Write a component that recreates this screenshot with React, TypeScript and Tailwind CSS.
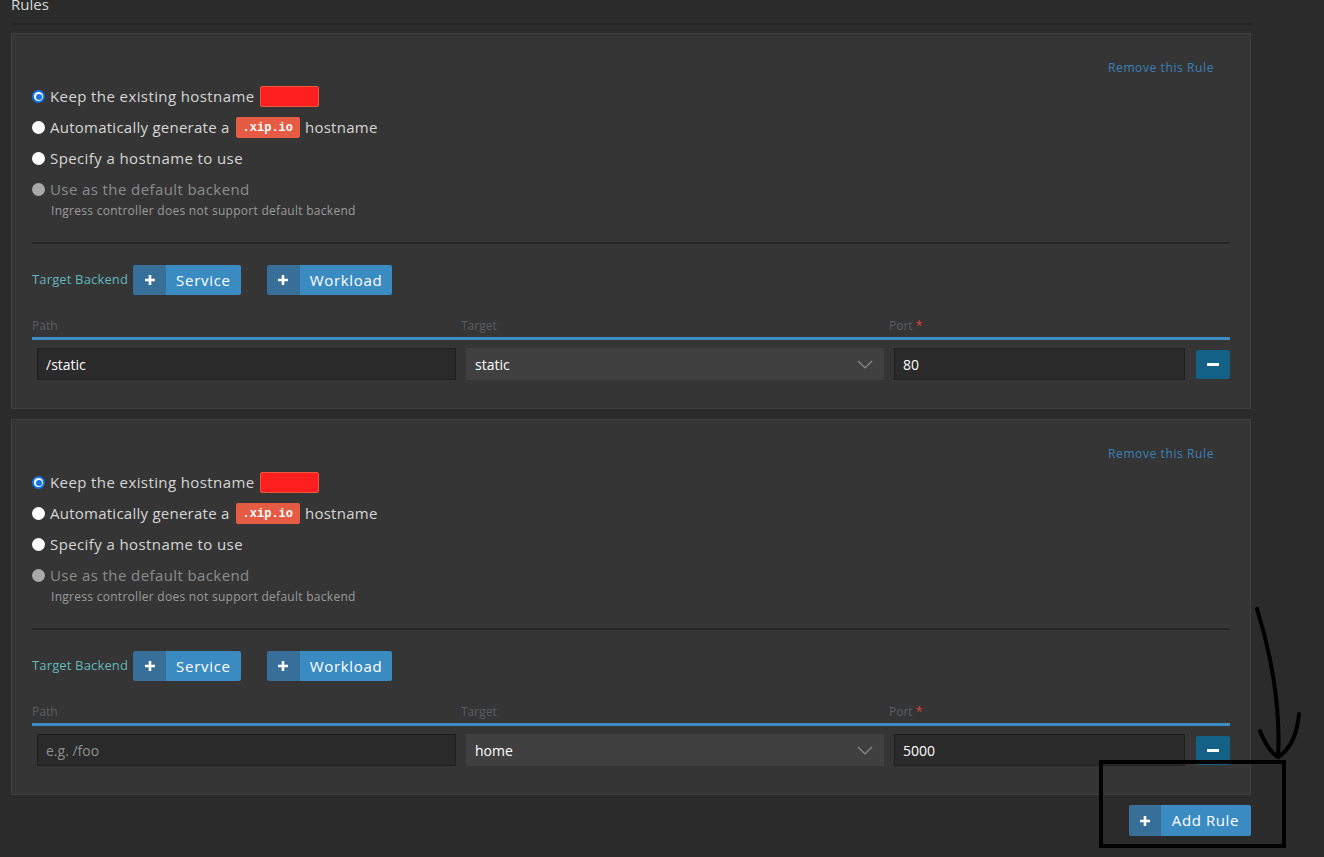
import React from "react";

interface Rule {
  path: string;
  target: string;
  port: string;
}

const rules: Rule[] = [
  { path: "/static", target: "static", port: "80" },
  { path: "", target: "home", port: "5000" },
];

function Radio({ state }: { state: "on" | "off" | "disabled" }) {
  if (state === "on") {
    return (
      <span className="w-[13px] h-[13px] rounded-full bg-[#1473e6] flex items-center justify-center shrink-0">
        <span className="w-[9px] h-[9px] rounded-full bg-white flex items-center justify-center">
          <span className="w-[6px] h-[6px] rounded-full bg-[#1473e6]" />
        </span>
      </span>
    );
  }
  return (
    <span
      className={
        state === "off"
          ? "w-[13px] h-[13px] rounded-full bg-white shrink-0"
          : "w-[13px] h-[13px] rounded-full bg-[#a9a9a9] shrink-0"
      }
    />
  );
}

function PlusIcon() {
  return (
    <svg width="12" height="12" viewBox="0 0 12 12">
      <path d="M6 1v10M1 6h10" stroke="white" strokeWidth="2.6" />
    </svg>
  );
}

function AddButton({ label }: { label: string }) {
  return (
    <button className="flex h-[30px] rounded-[2px] overflow-hidden text-white text-[15px] tracking-[0.7px]">
      <span className="w-[33px] bg-[#386f98] flex items-center justify-center">
        <PlusIcon />
      </span>
      <span className="bg-[#3b8bc3] flex items-center pl-[10px] pr-[10px]">{label}</span>
    </button>
  );
}

function RuleCard({ rule }: { rule: Rule }) {
  return (
    <div className="bg-[#353535] border border-[#3f3f3f] px-[20px] pt-[26px] pb-[28px]">
      <div className="flex justify-end pr-[16px]">
        <a className="text-[12px] leading-[16px] text-[#3a80b8] tracking-[0.6px] cursor-pointer">
          Remove this Rule
        </a>
      </div>

      <div className="mt-[5px] text-[15px] text-[#d6d6d6] tracking-[0.4px]">
        <label className="flex items-center h-[31px] gap-[5px]">
          <Radio state="on" />
          <span>Keep the existing hostname</span>
          <span className="w-[59px] h-[21px] bg-[#ff1f1f] border border-[#e9583f] rounded-[2px]" />
        </label>
        <label className="flex items-center h-[31px] gap-[5px] tracking-[0.25px]">
          <Radio state="off" />
          <span>Automatically generate a</span>
          <span className="ml-[1px] h-[21px] px-[7px] flex items-center bg-[#e65b43] rounded-[2px] text-white text-[12px] tracking-normal font-bold font-['Liberation_Mono',monospace]">
            .xip.io
          </span>
          <span>hostname</span>
        </label>
        <label className="flex items-center h-[31px] gap-[5px]">
          <Radio state="off" />
          <span>Specify a hostname to use</span>
        </label>
        <label className="flex items-center h-[31px] gap-[5px] text-[#8c8c8c]">
          <Radio state="disabled" />
          <span>Use as the default backend</span>
        </label>
        <p className="pl-[19px] -mt-[1px] text-[12px] leading-[14px] text-[#9b9b9b] tracking-[0.28px]">
          Ingress controller does not support default backend
        </p>
      </div>

      <div className="mt-[24px] h-[2px] bg-[#262626]" />

      <div className="mt-[21px] flex items-center">
        <span className="text-[13px] text-[#62b7bb] tracking-[0.15px] mr-[5px]">Target Backend</span>
        <AddButton label="Service" />
        <span className="w-[26px]" />
        <AddButton label="Workload" />
      </div>

      <div className="mt-[23px] grid grid-cols-[429px_428px_301px_40px] text-[12px] leading-[16px] text-[#5a5e62] border-b-[3px] border-[#3d8ac4] pb-[3px]">
        <span>Path</span>
        <span>Target</span>
        <span>
          Port <span className="text-[#e0443a]">*</span>
        </span>
        <span />
      </div>

      <div className="mt-[8px] grid grid-cols-[429px_428px_301px_40px] items-center text-[14px]">
        <div className="px-[5px]">
          <input
            className="w-full h-[32px] bg-[#2a2a2a] border border-[#1f1f1f] px-[8px] text-white placeholder:text-[#8f8f8f] outline-none"
            defaultValue={rule.path}
            placeholder="e.g. /foo"
          />
        </div>
        <div className="px-[5px]">
          <div className="w-full h-[32px] bg-[#404040] flex items-center justify-between pl-[9px] pr-[11px] text-white">
            <span>{rule.target}</span>
            <svg width="16" height="9" viewBox="0 0 16 9">
              <path d="M1 1l7 7 7-7" fill="none" stroke="#8d8d8d" strokeWidth="1.2" />
            </svg>
          </div>
        </div>
        <div className="px-[5px]">
          <input
            className="w-full h-[32px] bg-[#2a2a2a] border border-[#1f1f1f] px-[8px] text-white outline-none"
            defaultValue={rule.port}
          />
        </div>
        <div className="flex justify-end">
          <button className="w-[34px] h-[29px] bg-[#146188] rounded-[2px] flex items-center justify-center">
            <span className="w-[12px] h-[3px] bg-white" />
          </button>
        </div>
      </div>
    </div>
  );
}

export default function App() {
  return (
    <div className="relative w-[1324px] h-[857px] overflow-hidden bg-[#2b2b2b] font-['Open_Sans',sans-serif]">
      <div className="w-[1251px] pl-[11px]">
        <div className="-mt-[6px] text-[15px] leading-[20px] text-[#d8d8d8]">Rules</div>
        <div className="mt-[9px] h-[2px] bg-[#242424]" />

        <div className="mt-[8px] flex flex-col gap-[10px]">
          {rules.map((r, i) => (
            <RuleCard key={i} rule={r} />
          ))}
        </div>

        <div className="mt-[10px] flex justify-end">
          <button className="flex h-[31px] rounded-[2px] overflow-hidden text-white text-[15px] tracking-[0.6px]">
            <span className="w-[32px] bg-[#386f98] flex items-center justify-center">
              <PlusIcon />
            </span>
            <span className="bg-[#3b8bc3] flex items-center pl-[11px] pr-[12px]">Add Rule</span>
          </button>
        </div>
      </div>

      {/* hand-drawn annotation */}
      <svg className="absolute inset-0 pointer-events-none" width="1324" height="857">
        <g fill="none" stroke="black" strokeWidth="4" strokeLinecap="round">
          <path d="M1257 609 C1270 650 1281 705 1278 757" />
          <path d="M1260 731 Q1268 751 1278 757" />
          <path d="M1299 714 Q1296 746 1278 757" />
          <rect x="1101" y="762" width="183" height="84" strokeLinecap="butt" />
        </g>
      </svg>
    </div>
  );
}
